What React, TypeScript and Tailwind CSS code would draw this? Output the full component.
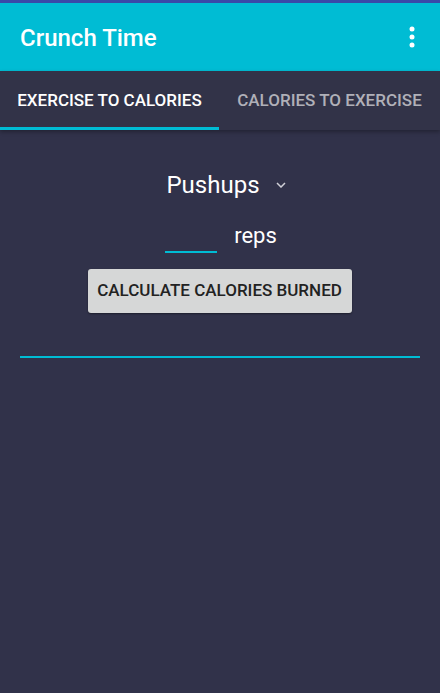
import React from "react";

export default function App() {
  return (
    <div className="w-[440px] h-[693px] bg-[#31324a] flex flex-col overflow-hidden" style={{ fontFamily: "Roboto, 'Liberation Sans', sans-serif" }}>
      <div className="h-[3px] bg-[#3a48a8]" />
      <div className="h-[68px] bg-[#00bcd4] flex items-center justify-between pl-[20px] pr-[25px]">
        <span className="text-white text-[24px] font-medium mt-[2px]">Crunch Time</span>
        <svg width="6" height="22" viewBox="0 0 6 22">
          <circle cx="3" cy="3" r="2.5" fill="white" />
          <circle cx="3" cy="11" r="2.5" fill="white" />
          <circle cx="3" cy="19" r="2.5" fill="white" />
        </svg>
      </div>
      <div className="h-[59px] bg-[#323348] flex shadow-[0_2px_4px_rgba(0,0,0,0.3)] relative">
        <div className="w-[219px] flex flex-col">
          <div className="flex-1 flex items-center justify-center text-white text-[17px] font-medium pt-[3px]">EXERCISE TO CALORIES</div>
          <div className="h-[3px] bg-[#00bcd4]" />
        </div>
        <div className="flex-1 flex items-center justify-center text-[#b0b0b8] text-[17px] font-medium pt-[3px] pb-[3px]">CALORIES TO EXERCISE</div>
      </div>
      <div className="flex flex-col items-center">
        <div className="mt-[39px] flex items-center h-[32px]">
          <span className="text-white text-[24px] ml-[12px]">Pushups</span>
          <svg width="10" height="6" viewBox="0 0 10 6" className="ml-[16px]">
            <path d="M1 1 L5 5 L9 1" stroke="#d0d0d8" strokeWidth="1.5" fill="none" />
          </svg>
        </div>
        <div className="mt-[24px] flex items-end">
          <div className="w-[52px] h-[2px] bg-[#00bcd4] ml-[2px]" />
          <span className="text-white text-[22px] ml-[17px] leading-none mb-[6px]">reps</span>
        </div>
        <button className="mt-[16px] w-[264px] h-[44px] bg-[#d6d7d7] rounded-[3px] text-[#222] text-[17px] font-medium shadow-[0_1px_2px_rgba(0,0,0,0.4)] ml-[-1px]">CALCULATE CALORIES BURNED</button>
      </div>
      <div className="mt-[43px] mx-[20px] h-[2px] bg-[#00bcd4]" />
    </div>
  );
}
